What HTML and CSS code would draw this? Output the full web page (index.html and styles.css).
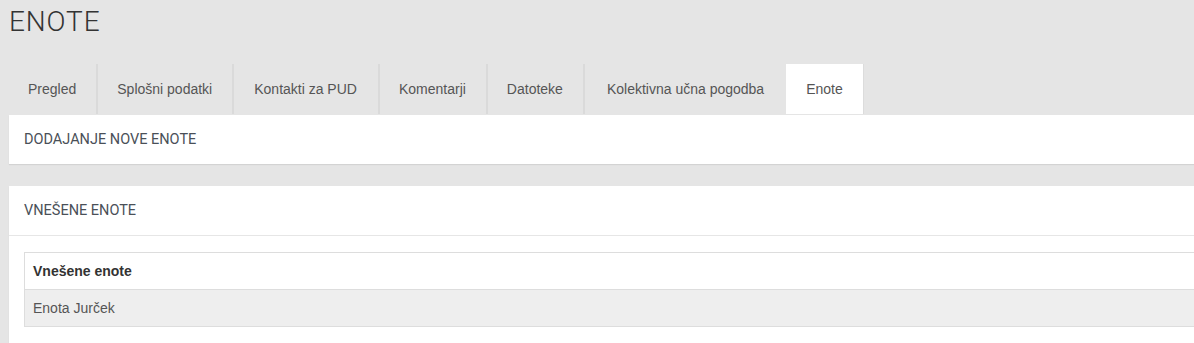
FILE: index.html
```html
<!DOCTYPE html>
<html lang="sl">

<head>
  <meta charset="UTF-8" />
  <title>Enote</title>
  <link rel="stylesheet" href="styles.css">
</head>

<body>
  <div class="page">
    <h1 class="page-title">ENOTE</h1>

    <div class="tabs">
      <a href="#" class="tab">Pregled</a>
      <a href="#" class="tab">Splošni podatki</a>
      <a href="#" class="tab">Kontakti za PUD</a>
      <a href="#" class="tab">Komentarji</a>
      <a href="#" class="tab">Datoteke</a>
      <a href="#" class="tab wide">Kolektivna učna pogodba</a>
      <a href="#" class="tab active">Enote</a>
    </div>

    <div class="panel panel-first">
      <div class="panel-heading">DODAJANJE NOVE ENOTE</div>
    </div>

    <div class="panel">
      <div class="panel-heading bordered">VNEŠENE ENOTE</div>
      <div class="panel-body">
        <table class="units">
          <thead>
            <tr>
              <th>Vnešene enote</th>
            </tr>
          </thead>
          <tbody>
            <tr>
              <td>Enota Jurček</td>
            </tr>
          </tbody>
        </table>
      </div>
    </div>
  </div>
</body>

</html>
```

FILE: styles.css
```css
body {
  margin: 0;
  background: #e5e5e5;
  font-family: 'Liberation Sans', Arial, sans-serif;
  font-size: 14px;
  color: #555;
  overflow: hidden;
}

.page {
  width: 1225px;
  padding-left: 9px;
}

.page-title {
  margin: 0;
  padding-top: 6px;
  height: 64px;
  font-family: 'Roboto', sans-serif;
  font-weight: 300;
  font-size: 28px;
  letter-spacing: 0.9px;
  line-height: 32px;
  color: #333;
  box-sizing: border-box;
}

.tabs {
  display: flex;
  height: 50px;
  margin-bottom: 1px;
}

.tab {
  display: flex;
  align-items: center;
  padding: 0 20px 0 19px;
  color: #555;
  text-decoration: none;
  border-right: 2px solid #dadada;
}

.tab:nth-child(3) {
  padding: 0 21px 0 20px;
}

.tab.wide {
  border-right: none;
  padding: 0 22px 0 22px;
}

.tab.active {
  background: #fff;
  border-right: 1px solid #dcdcdc;
  padding: 0 20px;
}

.panel {
  background: #fff;
  box-shadow: 0 1px 1px rgba(0, 0, 0, 0.08);
}

.panel-first {
  margin-bottom: 22px;
}

.panel-heading {
  height: 49px;
  display: flex;
  align-items: center;
  padding-left: 15px;
  font-family: 'Roboto', sans-serif;
  font-weight: 400;
  font-size: 14.5px;
  color: #4a5058;
}

.panel-heading.bordered {
  height: 49px;
  border-bottom: 1px solid #e6e6e6;
}

.panel-body {
  padding: 16px 15px 20px 15px;
}

.units {
  width: 100%;
  border-collapse: collapse;
  border: 1px solid #dddddd;
}

.units th,
.units td {
  height: 36px;
  padding: 0 8px;
  text-align: left;
}

.units th {
  font-weight: bold;
  color: #333;
  border-bottom: 1px solid #dddddd;
}

.units td {
  background: #eeeeee;
  color: #555;
}
```
